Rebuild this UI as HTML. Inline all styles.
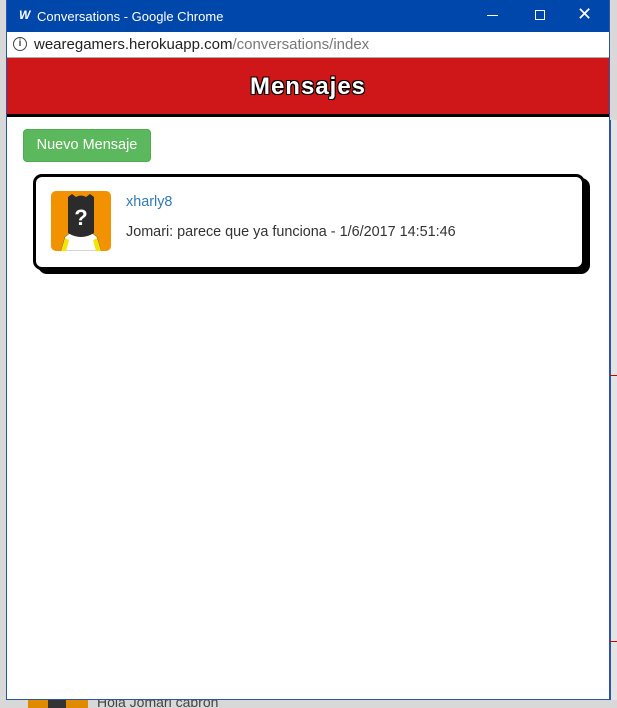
<!DOCTYPE html>
<html><head><meta charset="utf-8"><style>
*{box-sizing:border-box;margin:0;padding:0}
body{width:617px;height:708px;overflow:hidden;background:#d8d8d8;font-family:"Liberation Sans",sans-serif;position:relative}
.win{position:absolute;left:6px;top:0;width:604px;height:700px;background:#fff;border:1px solid #2a55a8;border-top:none}
.title{position:absolute;left:0;top:0;width:602px;height:32px;background:#0047ab;color:#fff;font-size:13px}
.title .t{position:absolute;left:30px;top:9px}
.title .w{position:absolute;left:12px;top:8px;font-style:italic;font-weight:bold;font-size:12px}
.addr{position:absolute;left:0;top:32px;width:602px;height:26px;border-bottom:1px solid #aaa;font-size:15px;color:#222}
.addr .u{position:absolute;left:27px;top:4px;white-space:nowrap}
.addr .g{color:#777}
.info{position:absolute;left:6px;top:5px;width:14px;height:14px;border:1.5px solid #444;border-radius:50%;font-size:10px;text-align:center;line-height:11px;font-weight:bold;color:#444}
.hdr{position:absolute;left:0;top:58px;width:602px;height:59px;background:#cf1719;border-bottom:3px solid #000;text-align:center;color:#fff;font-size:24px;font-weight:bold;line-height:58px;text-shadow:1px 1px 0 #000,-1px -1px 0 #000,1px -1px 0 #000,-1px 1px 0 #000;letter-spacing:1px}
.btn{position:absolute;left:16px;top:129px;width:128px;height:33px;background:#5cb85c;border:1px solid #4cae4c;border-radius:4px;color:#fff;font-size:14.5px;line-height:31px;text-align:center}
.card{position:absolute;left:26px;top:174px;width:552px;height:96px;border:3px solid #000;border-radius:9px;box-shadow:5px 4px 0 #000;background:#fff}
.av{position:absolute;left:15px;top:14px;width:60px;height:60px;background:#f39200;border-radius:5px;overflow:hidden}
.name{position:absolute;left:90px;top:17px;color:#337ab7;font-size:14.4px}
.msg{position:absolute;left:90px;top:47px;color:#333;font-size:14.4px}
</style></head><body>
<div style="position:absolute;left:610px;top:120px;width:7px;height:580px;background:#e4e4e4;border-left:1px solid #2a55a8"></div>
<div style="position:absolute;left:610px;top:375px;width:7px;height:1px;background:#c00"></div>
<div style="position:absolute;left:610px;top:641px;width:7px;height:1px;background:#c00"></div>
<div style="position:absolute;left:28px;top:700px;width:60px;height:8px;background:#e08a00"></div>
<div style="position:absolute;left:48px;top:700px;width:18px;height:8px;background:#333"></div>
<div style="position:absolute;left:97px;top:694px;font-size:14px;color:#444;height:14px;overflow:hidden">Hola Jomari cabron</div>
<div class="win">
<div class="title"><span class="w">W</span><span class="t">Conversations - Google Chrome</span>
<span style="position:absolute;left:480px;top:15px;width:11px;height:1px;background:#fff"></span>
<span style="position:absolute;left:528px;top:10px;width:10px;height:10px;border:1px solid #fff"></span>
<span style="position:absolute;left:570px;top:4px;font-size:18px">✕</span></div>
<div class="addr"><div class="info">i</div><div class="u">wearegamers.herokuapp.com<span class="g">/conversations/index</span></div></div>
<div class="hdr">Mensajes</div>
<div class="btn">Nuevo Mensaje</div>
<div class="card">
<div class="av"><svg width="60" height="60" viewBox="0 0 60 60">
<path d="M10 60 L14 46 Q20 40 30 40 Q40 40 46 46 L50 60Z" fill="#fff" stroke="#555" stroke-width="0.5"/>
<path d="M10 60 L14 47 L18 49 L15 60Z M50 60 L46 47 L42 49 L45 60Z" fill="#f5e600"/>
<path d="M17 6 L21 3 L25 6 Q30 3 35 6 L39 3 L43 6 L43 42 Q30 50 17 42Z" fill="#2b2b2b"/>
<text x="30" y="34" fill="#fff" font-size="22" font-weight="bold" text-anchor="middle" font-family="Liberation Sans">?</text></svg></div>
<div class="name">xharly8</div>
<div class="msg">Jomari: parece que ya funciona - 1/6/2017 14:51:46</div>
</div>
</div>
</body></html>
